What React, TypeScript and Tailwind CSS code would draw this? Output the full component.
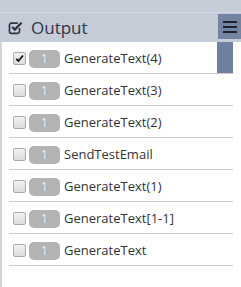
import React from 'react';

type Item = { name: string; count: number; checked?: boolean };

const items: Item[] = [
  { name: 'GenerateText(4)', count: 1, checked: true },
  { name: 'GenerateText(3)', count: 1 },
  { name: 'GenerateText(2)', count: 1 },
  { name: 'SendTestEmail', count: 1 },
  { name: 'GenerateText(1)', count: 1 },
  { name: 'GenerateText[1-1]', count: 1 },
  { name: 'GenerateText', count: 1 },
];

function CheckSquareIcon() {
  return (
    <svg width="15" height="15" viewBox="0 0 15 15" className="shrink-0">
      <path
        d="M11.5 8v3.5a1.8 1.8 0 0 1-1.8 1.8H3.3a1.8 1.8 0 0 1-1.8-1.8V5a1.8 1.8 0 0 1 1.8-1.8h6.5"
        fill="none"
        stroke="#2e3645"
        strokeWidth="1.7"
      />
      <path d="M4.3 7l2.5 2.6L13.6 2.8" fill="none" stroke="#2e3645" strokeWidth="2.3" />
    </svg>
  );
}

function Box({ checked }: { checked?: boolean }) {
  return (
    <span className="flex h-[13px] w-[13px] shrink-0 items-center justify-center rounded-[2px] border border-[#a9a9a9] bg-gradient-to-b from-[#f2f2f2] to-[#dcdcdc]">
      {checked && (
        <svg width="9" height="9" viewBox="0 0 9 9">
          <path d="M1.2 4.8l2.2 2.2L8 1.5" fill="none" stroke="#111" strokeWidth="1.8" />
        </svg>
      )}
    </span>
  );
}

export default function App() {
  return (
    <div className="flex h-[287px] w-[241px] flex-col overflow-hidden bg-white font-['Open_Sans',sans-serif]">
      <div className="h-[13px] shrink-0 border-b border-[#d2d8e2] bg-[#c6cdd9]" />

      <div className="flex h-[29px] shrink-0 items-center bg-[#c5ccd8] pl-[8px]">
        <CheckSquareIcon />
        <span className="ml-[8px] text-[17px] leading-none text-[#2e3645]">Output</span>
        <button className="ml-auto mt-[1px] flex h-[25px] w-[23px] flex-col items-center justify-center gap-[3px] self-start bg-[#7383a2]">
          <span className="h-[2px] w-[14px] bg-[#1e2230]" />
          <span className="h-[2px] w-[14px] bg-[#1e2230]" />
          <span className="h-[2px] w-[14px] bg-[#1e2230]" />
        </button>
      </div>

      <div className="relative flex-1 border-l-2 border-[#d4d4d4] pl-[7px]">
        <div className="absolute right-[8px] top-0 h-[31px] w-[16px] bg-[#6e7fa0]" />
        <ul className="w-[224px]">
          {items.map((item) => (
            <li
              key={item.name}
              className="flex h-[32px] items-center border-b border-[#cccccc] pl-[4px] pt-[2px]"
            >
              <Box checked={item.checked} />
              <span className="ml-[3px] flex h-[18px] w-[31px] items-center justify-center rounded-[5px] bg-[#b3b3b3] text-[12px] text-[#f0f0f0]">
                {item.count}
              </span>
              <span className="ml-[4px] text-[13px] text-[#333333]">{item.name}</span>
            </li>
          ))}
        </ul>
      </div>
    </div>
  );
}
